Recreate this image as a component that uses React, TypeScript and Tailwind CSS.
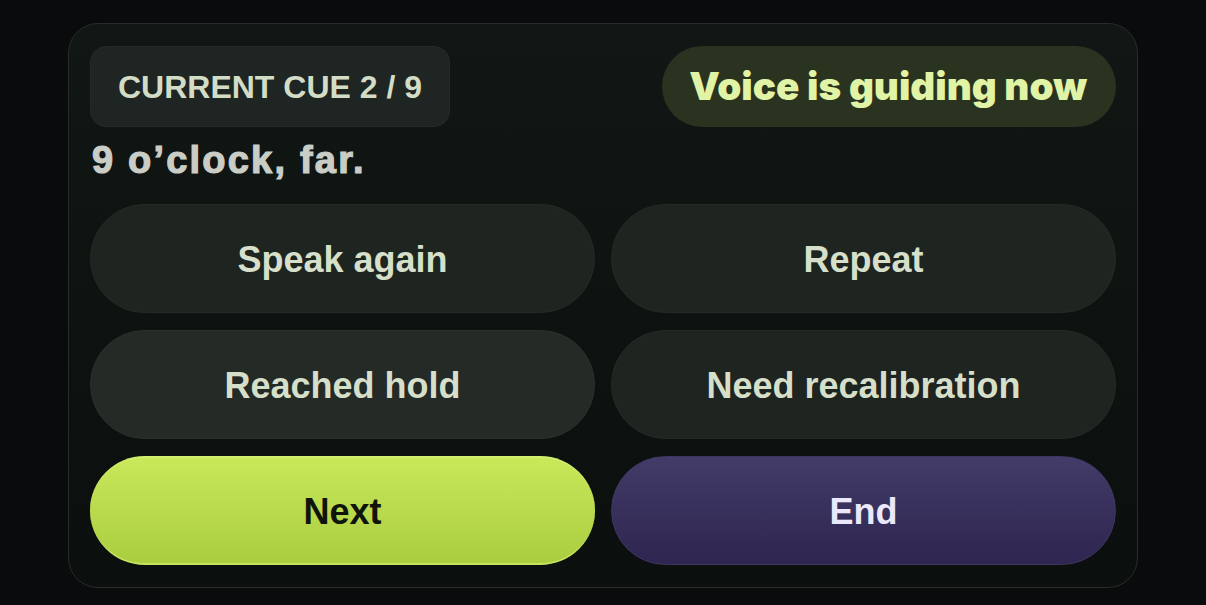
import React from 'react';

type Action = {
  label: string;
  tone: 'muted' | 'raised' | 'primary' | 'danger';
};

const actions: Action[] = [
  { label: 'Speak again', tone: 'muted' },
  { label: 'Repeat', tone: 'muted' },
  { label: 'Reached hold', tone: 'raised' },
  { label: 'Need recalibration', tone: 'muted' },
  { label: 'Next', tone: 'primary' },
  { label: 'End', tone: 'danger' },
];

const toneClasses: Record<Action['tone'], string> = {
  muted: 'bg-[#1e2420] border border-[#242a26] text-[#d6dfc9]',
  raised: 'bg-[#242b27] border border-[#2a312c] text-[#d6dfc9]',
  primary:
    'bg-gradient-to-b from-[#c9e85a] to-[#aacd40] border-t-2 border-b-2 border-t-[#d3ee6c] border-b-[#c6e35f] text-[#0f150b]',
  danger: 'bg-gradient-to-b from-[#433b68] to-[#2e2650] border border-[#3d3662] text-[#ece8fb]',
};

export default function App() {
  return (
    <div className="min-h-screen w-full bg-[#090b0d] px-[68px] pt-[23px] font-['Liberation_Sans',Arial,sans-serif]">
      {/* Cue card */}
      <div className="rounded-[30px] border border-[#272d2a] bg-gradient-to-b from-[#111714] to-[#0b0f0d] px-[21px] py-[22px]">
        {/* Header */}
        <div className="flex items-center justify-between">
          <div className="flex h-[81px] w-[360px] items-center justify-center rounded-[16px] border border-[#242a26] bg-[#1f2522] text-[32px] font-bold text-[#d3ddc6]">
            CURRENT CUE 2 / 9
          </div>
          <div className="flex h-[81px] items-center rounded-full bg-[#29331f] pl-[27px] pr-[29px] font-['Inter',sans-serif] text-[38.6px] font-black text-[#e1f3a5]">
            Voice is guiding now
          </div>
        </div>

        <h1 className="mt-[11px] pl-[2px] text-[38px] font-bold leading-[44px] tracking-[2.2px] text-[#c9cdc6] [-webkit-text-stroke:1.2px_#c9cdc6]">
          9 o’clock, far.
        </h1>

        {/* Actions */}
        <div className="mt-[22px] grid grid-cols-2 gap-x-4 gap-y-[17px]">
          {actions.map((a) => (
            <button
              key={a.label}
              className={`flex h-[109px] items-center justify-center rounded-full pt-[3px] text-[36px] font-bold ${toneClasses[a.tone]}`}
            >
              {a.label}
            </button>
          ))}
        </div>
      </div>
    </div>
  );
}
